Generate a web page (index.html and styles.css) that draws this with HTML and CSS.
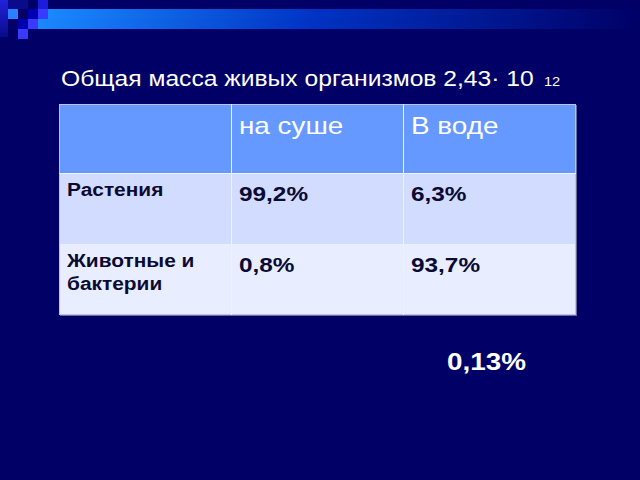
FILE: index.html
```html
<!DOCTYPE html>
<html lang="ru">
<head>
<meta charset="utf-8">
<link rel="stylesheet" href="styles.css">
</head>
<body>
<div class="slide">
  <svg class="deco" width="640" height="40" viewBox="0 0 640 40">
    <defs>
      <linearGradient id="bar" x1="0" x2="1" y1="0" y2="0">
        <stop offset="0" stop-color="#1a88ff"/>
        <stop offset="0.45" stop-color="#0033c4"/>
        <stop offset="1" stop-color="#000066"/>
      </linearGradient>
      <linearGradient id="col" x1="0" x2="0" y1="0" y2="1">
        <stop offset="0" stop-color="#2222dd"/>
        <stop offset="1" stop-color="#0a0a8a"/>
      </linearGradient>
    </defs>
    <rect x="0" y="0" width="8" height="37" fill="url(#col)"/>
    <rect x="8" y="0" width="20" height="9" fill="#0a0a8c"/>
    <rect x="38" y="0" width="10" height="9" fill="#1c1cdc"/>
    <rect x="8" y="9" width="10" height="10" fill="#2a80ff"/>
    <rect x="28" y="9" width="10" height="10" fill="#0000b0"/>
    <rect x="38" y="9" width="10" height="10" fill="#3a3aff"/>
    <rect x="18" y="19" width="10" height="10" fill="#0000b0"/>
    <rect x="28" y="19" width="10" height="10" fill="#3a3aff"/>
    <rect x="18" y="29" width="10" height="10" fill="#3a3aff"/>
    <rect x="48" y="9" width="592" height="10" fill="url(#bar)"/>
    <rect x="38" y="19" width="602" height="10" fill="url(#bar)"/>
  </svg>
  <h1 class="title"><span class="wide title-text">Общая масса живых организмов 2,43· 10 <span class="exp">12</span></span></h1>
  <table class="data">
    <tr class="head">
      <td class="cell"></td>
      <td class="cell"><span class="wide">на суше</span></td>
      <td class="cell"><span class="wide">В воде</span></td>
    </tr>
    <tr class="row1">
      <td class="cell label"><span class="wide">Растения</span></td>
      <td class="cell val"><span class="wide">99,2%</span></td>
      <td class="cell val"><span class="wide">6,3%</span></td>
    </tr>
    <tr class="row2">
      <td class="cell label"><span class="wide">Животные и<br>бактерии</span></td>
      <td class="cell val"><span class="wide">0,8%</span></td>
      <td class="cell val"><span class="wide">93,7%</span></td>
    </tr>
  </table>
  <div class="note"><span class="wide">0,13%</span></div>
</div>
</body>
</html>
```

FILE: styles.css
```css
html, body {
  margin: 0;
  padding: 0;
  background: #000066;
}
.slide {
  width: 640px;
  height: 480px;
  overflow: hidden;
  font-family: "Liberation Sans", Arial, sans-serif;
}
.deco {
  display: block;
}
.wide {
  display: inline-block;
  white-space: nowrap;
  transform: scaleX(1.16);
  transform-origin: 0 0;
}
.title {
  margin: 24px 0 0 61px;
  font-size: 22px;
  line-height: 30px;
  font-weight: normal;
  color: #ffffff;
  white-space: nowrap;
}
.title-text {
  transform: scaleX(1.12);
}
.exp {
  font-size: 13px;
  margin-left: 3px;
}
.data {
  margin: 7px 0 0 59px;
  border-collapse: collapse;
  border: 1px solid #b8c4ee;
  box-shadow: 1px 1px 0 #6a6aa0;
  table-layout: fixed;
  width: 517px;
}
.cell {
  box-sizing: border-box;
  width: 172px;
  padding: 0 0 0 7px;
  vertical-align: top;
  border-left: 1px solid #eef2ff;
}
.cell:first-child {
  border-left: none;
}
.head .cell {
  height: 69px;
  background: #6699ff;
  color: #ffffff;
  font-size: 24px;
  padding-top: 7px;
  border-bottom: 1px solid #eef2ff;
}
.row1 .cell {
  height: 70px;
  background: #d2dcff;
}
.row2 .cell {
  height: 71px;
  background: #e8eeff;
}
.cell.label {
  font-weight: bold;
  font-size: 18px;
  line-height: 23px;
  color: #0a0a33;
}
.row1 .cell.label {
  padding-top: 5px;
}
.row2 .cell.label {
  padding-top: 6px;
}
.cell.val {
  font-weight: bold;
  font-size: 21px;
  color: #0a0a33;
}
.row1 .cell.val {
  padding-top: 8px;
}
.row2 .cell.val {
  padding-top: 9px;
}
.note {
  margin: 33px 0 0 447px;
  font-size: 24px;
  font-weight: bold;
  color: #ffffff;
}
```
